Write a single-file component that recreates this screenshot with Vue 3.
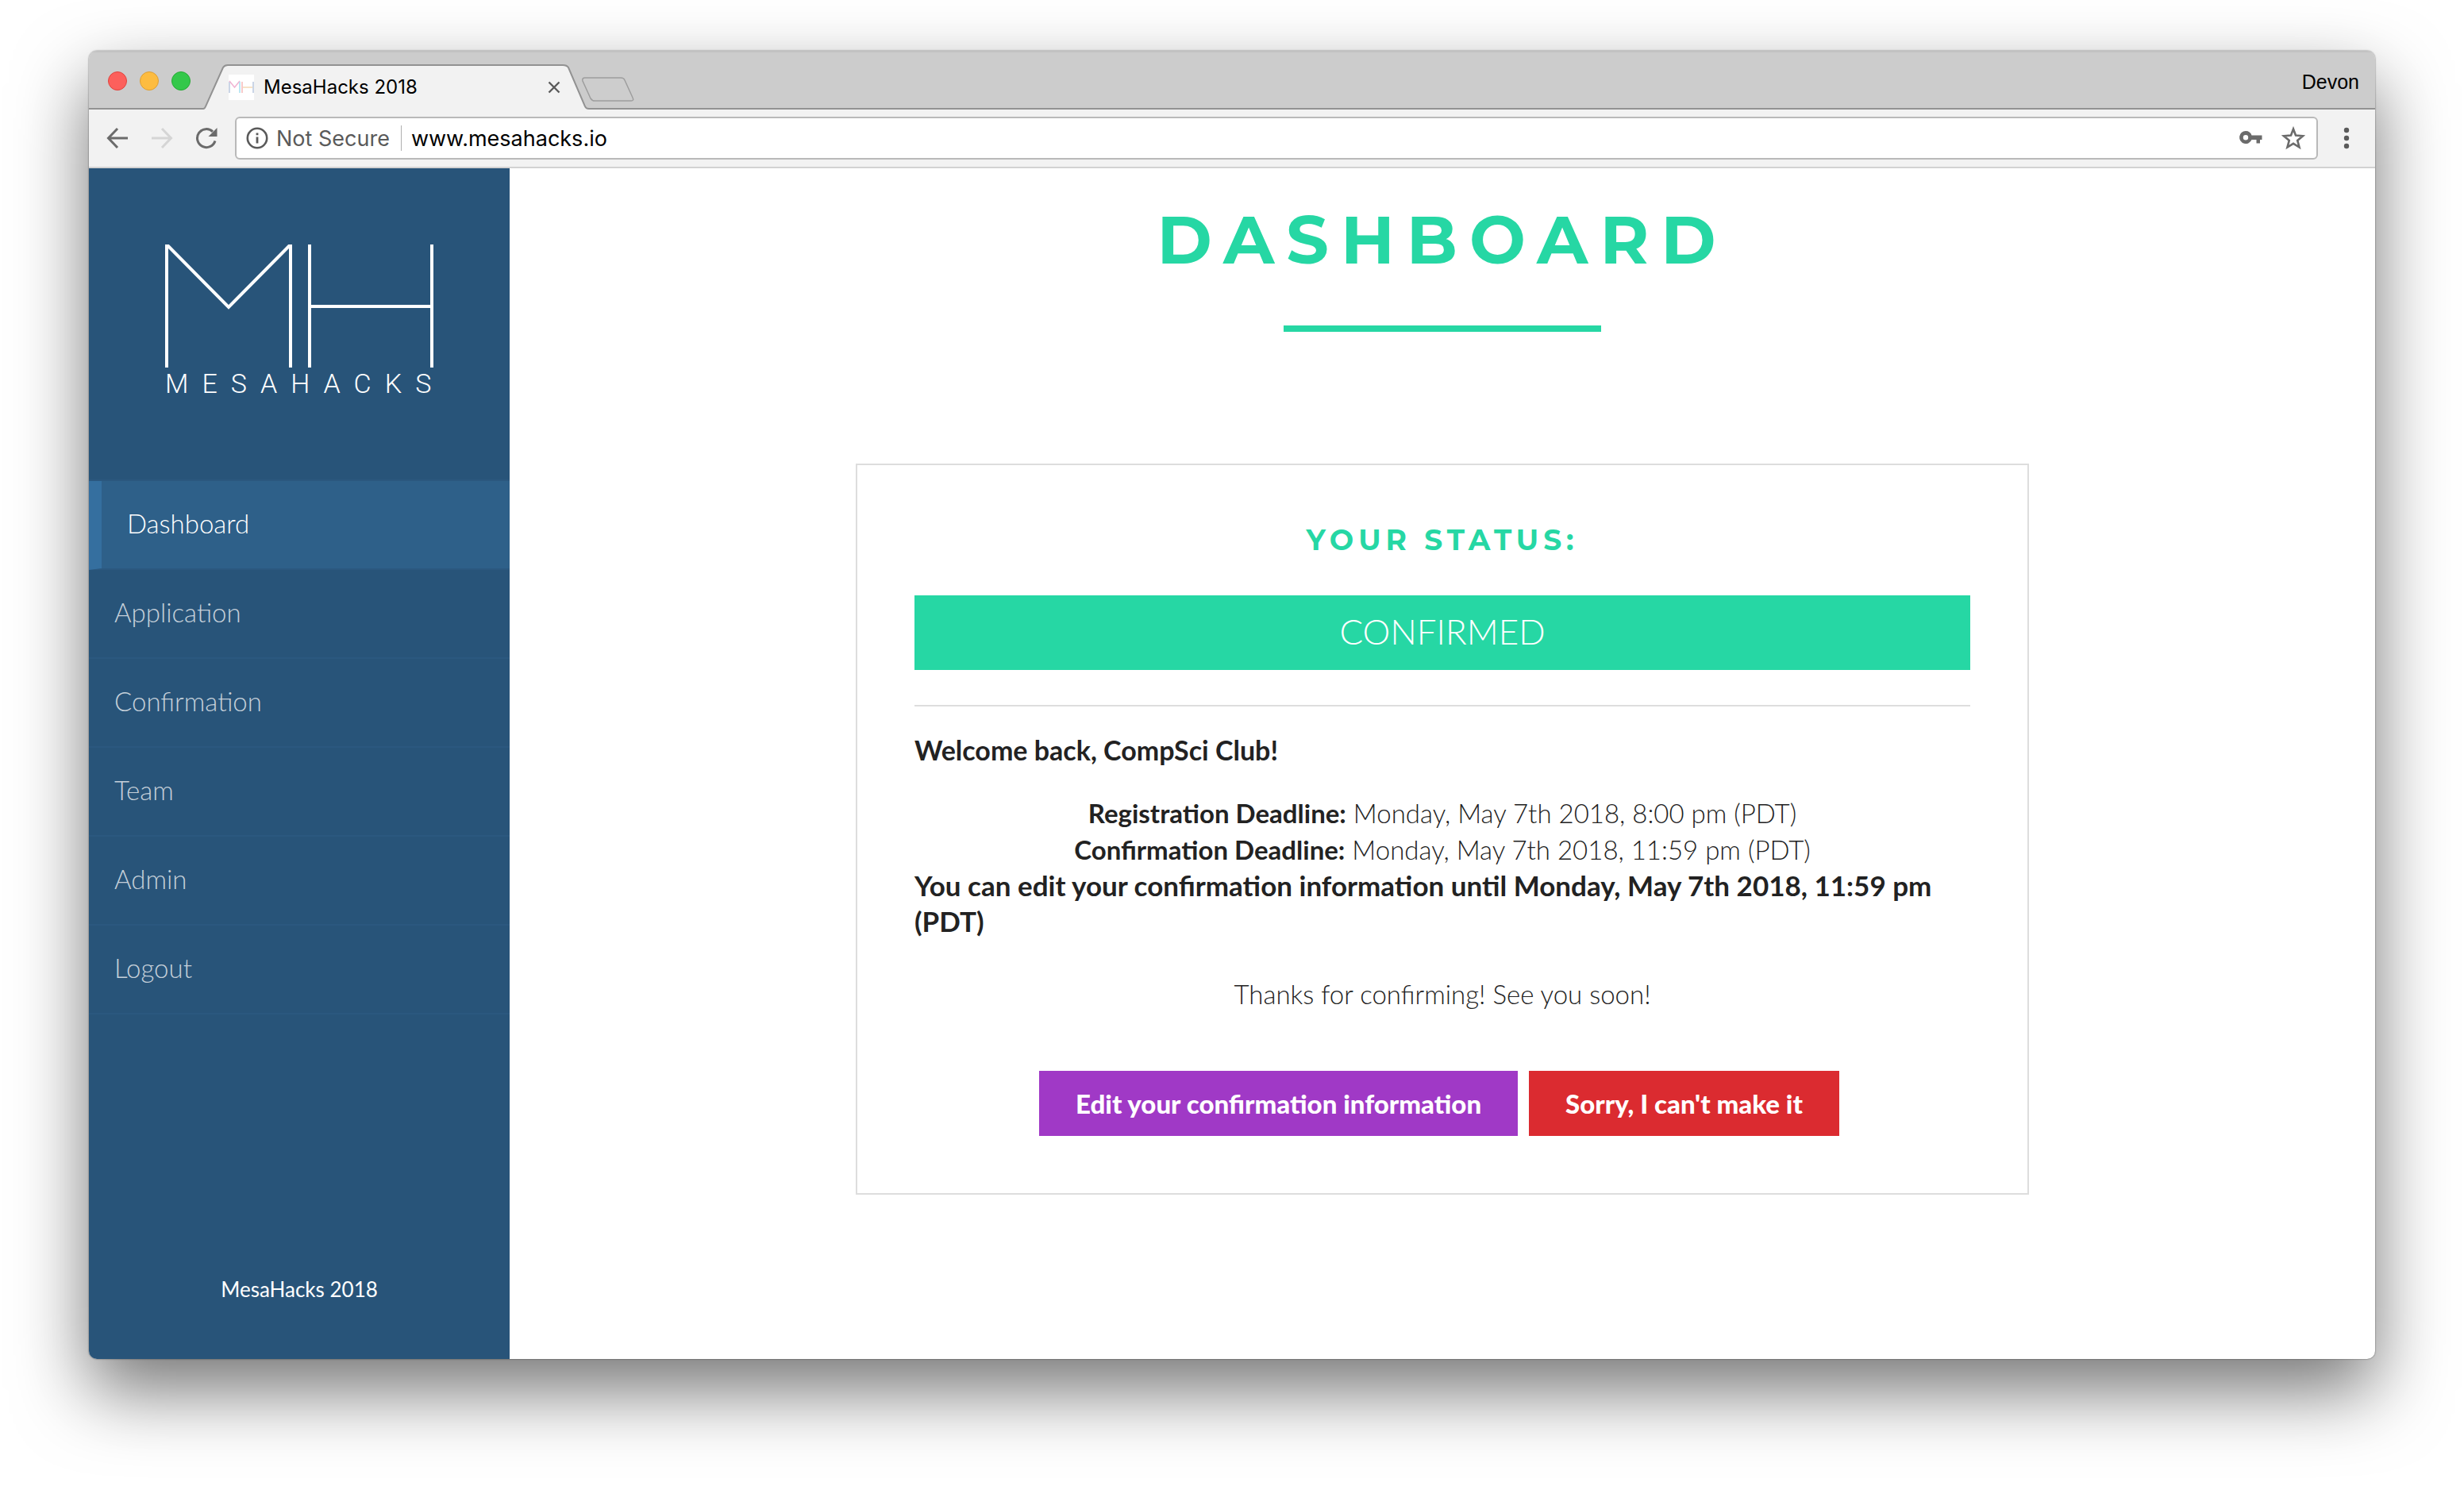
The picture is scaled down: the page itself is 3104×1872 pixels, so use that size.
<script setup>
import { ref } from 'vue'

const address = ref('www.mesahacks.io')
const current = ref('Dashboard')
const pages = ['Dashboard', 'Application', 'Confirmation', 'Team', 'Admin', 'Logout']
const deadlines = [
  { label: 'Registration Deadline:', date: 'Monday, May 7th 2018, 8:00 pm (PDT)' },
  { label: 'Confirmation Deadline:', date: 'Monday, May 7th 2018, 11:59 pm (PDT)' }
]
</script>

<template>
  <div class="desktop">
    <div class="window">
      <header class="tabstrip">
        <div class="lights">
          <button class="light red" aria-label="Close window"></button>
          <button class="light yellow" aria-label="Minimize window"></button>
          <button class="light green" aria-label="Zoom window"></button>
        </div>
        <div class="tab">
          <svg class="tab-shape" viewBox="0 0 486 57" preserveAspectRatio="none" aria-hidden="true">
            <path d="M0 57V56.5Q2 56 3 53L25 4Q27 1 31 1H453Q458 1 460 4L481 53Q482 56 486 56.5V57Z" fill="#f2f2f2" />
            <path d="M0 56Q2 56 3 53L25 4Q27 1 31 1H453Q458 1 460 4L481 53Q482 56 486 56" fill="none" stroke="#929292" stroke-width="2" />
          </svg>
          <svg class="favicon" viewBox="0 0 32 32" aria-hidden="true">
            <rect width="32" height="32" fill="#fff" />
            <path d="M1 9V23" stroke="#b9c7de" stroke-width="1.5" />
            <path d="M1 8L7.500 16L14 8" fill="none" stroke="#f0b4d2" stroke-width="1.500" />
            <path d="M14 9V23" stroke="#a5dff0" stroke-width="1.500" />
            <path d="M17 9V23" stroke="#f6b8b8" stroke-width="1.500" />
            <path d="M18 16H30" stroke="#f5d9b5" stroke-width="1.500" />
            <path d="M31 9V23" stroke="#b9c7de" stroke-width="1.500" />
          </svg>
          <span class="tab-title">MesaHacks 2018</span>
          <button class="tab-close" aria-label="Close tab">
            <svg viewBox="0 0 16 16" width="16" height="16"><path d="M1.500 1.500L14.500 14.500M14.500 1.500L1.500 14.500" stroke="#5a5a5a" stroke-width="2.400" /></svg>
          </button>
        </div>
        <button class="new-tab" aria-label="New tab">
          <svg viewBox="0 0 68 34" width="68" height="34">
            <path d="M5 2H50Q54 2 55 5L65 27Q67 31 63 31H17Q14 31 12 28L2 6Q1 2 5 2Z" fill="#cdcdcd" stroke="#9d9d9d" stroke-width="1.500" />
          </svg>
        </button>
        <span class="profile">Devon</span>
      </header>

      <div class="toolbar">
        <button class="tool" aria-label="Back">
          <svg viewBox="0 0 28 28" width="28" height="28"><path d="M27 14H3M14 2L2.500 14L14 26" fill="none" stroke="#6b6b6b" stroke-width="3" /></svg>
        </button>
        <button class="tool" aria-label="Forward">
          <svg viewBox="0 0 28 28" width="28" height="28"><path d="M1 14H25M14 2L25.500 14L14 26" fill="none" stroke="#d5d5d5" stroke-width="3" /></svg>
        </button>
        <button class="tool" aria-label="Reload">
          <svg viewBox="0 0 28 28" width="28" height="28">
            <path d="M25 17.500A11.500 11.500 0 1 1 22 5.800" fill="none" stroke="#6b6b6b" stroke-width="3" />
            <path d="M27.500 1V12H16.500Z" fill="#6b6b6b" />
          </svg>
        </button>
        <div class="omnibox">
          <button class="security">
            <svg viewBox="0 0 28 28" width="28" height="28" aria-hidden="true">
              <circle cx="14" cy="14" r="12.200" fill="none" stroke="#5a5a5a" stroke-width="2.600" />
              <path d="M14 12.500V20.500M14 7.500V10.200" stroke="#5a5a5a" stroke-width="2.800" />
            </svg>
            Not Secure
          </button>
          <input v-model="address" class="address" type="text" aria-label="Address" spellcheck="false" />
          <button class="tool" aria-label="Passwords">
            <svg viewBox="0 0 30 30" width="30" height="30">
              <path fill-rule="evenodd" d="M9 6A8 8 0 1 0 16.500 17H22.500V21.500H27V17H29.500V11.500H16.500A8 8 0 0 0 9 6ZM9 11A3.200 3.200 0 1 1 9 17.400A3.200 3.200 0 1 1 9 11Z" fill="#6b6b6b" />
            </svg>
          </button>
          <button class="tool" aria-label="Bookmark this page">
            <svg viewBox="0 0 30 30" width="30" height="30">
              <path d="M15 3.500L18 11.500L27 12.200L20.200 17.900L22.500 26.500L15 21.800L7.500 26.500L9.800 17.900L3 12.200L12 11.500Z" fill="none" stroke="#6b6b6b" stroke-width="2.600" />
            </svg>
          </button>
        </div>
        <button class="tool" aria-label="Menu">
          <svg viewBox="0 0 8 28" width="8" height="28"><g fill="#5a5a5a"><circle cx="4" cy="4" r="3.200" /><circle cx="4" cy="14" r="3.200" /><circle cx="4" cy="24" r="3.200" /></g></svg>
        </button>
      </div>

      <div class="page">
        <aside class="sidebar">
          <div class="logo">
            <svg viewBox="0 0 338 155" width="338" height="155" role="img" aria-label="MH">
              <path d="M2 155V0M158 0V155M182 0V155M336 0V155M182 78H336" fill="none" stroke="#fff" stroke-width="4" />
              <path d="M3 1L80 79L157 1" fill="none" stroke="#fff" stroke-width="4" />
            </svg>
            <span class="wordmark">MESAHACKS</span>
          </div>
          <nav>
            <ul class="menu">
              <li v-for="name in pages" :key="name">
                <a href="#" :class="{ active: name === current }" @click.prevent="current = name">{{ name }}</a>
              </li>
            </ul>
          </nav>
          <footer class="credit">MesaHacks 2018</footer>
        </aside>

        <main class="content">
          <h1>DASHBOARD</h1>
          <section class="card">
            <h2>YOUR STATUS:</h2>
            <div class="status">CONFIRMED</div>
            <hr />
            <p class="strong">Welcome back, CompSci Club!</p>
            <div class="deadlines">
              <div v-for="d in deadlines" :key="d.label"><strong>{{ d.label }}</strong> {{ d.date }}</div>
            </div>
            <p class="strong notice">You can edit your confirmation information until Monday, May 7th 2018, 11:59 pm (PDT)</p>
            <p class="thanks">Thanks for confirming! See you soon!</p>
            <div class="actions">
              <button class="edit">Edit your confirmation information</button>
              <button class="decline">Sorry, I can't make it</button>
            </div>
          </section>
        </main>
      </div>
    </div>
  </div>
</template>

<style>
body {
  margin: 0;
  background: #fff;
}
</style>

<style scoped>
* {
  box-sizing: border-box;
}
button {
  margin: 0;
  padding: 0;
  border: 0;
  background: none;
  font: inherit;
  color: inherit;
}
svg {
  display: block;
}
.desktop {
  display: flex;
  min-height: 100vh;
  padding: 64px 112px 160px;
  overflow: hidden;
  font-family: Lato, sans-serif;
}
.window {
  flex: 1;
  display: flex;
  flex-direction: column;
  min-width: 0;
  overflow: hidden;
  border-radius: 10px;
  background: #fff;
  box-shadow: 0 0 2px rgba(0, 0, 0, 0.6), 0 40px 92px rgba(0, 0, 0, 0.54);
}

/* Browser chrome */
.tabstrip {
  display: flex;
  align-items: flex-end;
  height: 74px;
  padding: 2px 20px 0 24px;
  background: #ccc;
  box-shadow: inset 0 -2px #929292, inset 0 2px #c2c2c2;
  font-family: Inter, sans-serif;
  font-size: 24px;
}
.lights {
  display: flex;
  gap: 16px;
  align-self: center;
  width: 120px;
}
.light {
  width: 24px;
  height: 24px;
  border: 1px solid #e0443e;
  border-radius: 50%;
  background: #fc605c;
}
.yellow {
  border-color: #de9f34;
  background: #fdbc40;
}
.green {
  border-color: #27aa35;
  background: #34c84a;
}
.tab {
  position: relative;
  display: flex;
  align-items: center;
  width: 486px;
  height: 57px;
  padding: 0 36px 0 32px;
}
.tab-shape {
  position: absolute;
  inset: 0;
  width: 100%;
  height: 100%;
}
.favicon {
  position: relative;
  width: 32px;
  height: 32px;
  margin-right: 12px;
}
.tab-title {
  position: relative;
  flex: 1;
  color: #000;
}
.tab-close {
  position: relative;
}
.new-tab {
  margin: 0 auto 8px -10px;
}
.profile {
  align-self: center;
  padding-top: 2px;
  font-family: "Liberation Sans", sans-serif;
  font-size: 25px;
  line-height: 28px;
  color: #000;
}
.toolbar {
  display: flex;
  align-items: center;
  gap: 28px;
  height: 74px;
  padding: 0 32px 0 22px;
  border-bottom: 2px solid #d2d2d2;
  background: #f2f2f2;
}
.omnibox {
  flex: 1;
  display: flex;
  align-items: center;
  gap: 24px;
  height: 54px;
  margin: 0 4px 0 -6px;
  padding: 0 14px 0 12px;
  border: 2px solid #b9b9b9;
  border-radius: 6px;
  background: #fff;
  font-family: Inter, sans-serif;
  font-size: 27px;
}
.security {
  display: flex;
  align-items: center;
  gap: 10px;
  height: 32px;
  padding-right: 14px;
  border-right: 1px solid #b0b0b0;
  white-space: nowrap;
  color: #5a5a5a;
}
.address {
  flex: 1;
  min-width: 0;
  margin-left: -12px;
  padding: 0;
  border: 0;
  outline: 0;
  background: none;
  font: inherit;
  color: #000;
}

/* Sidebar */
.page {
  flex: 1;
  display: flex;
}
.sidebar {
  display: flex;
  flex-direction: column;
  flex: none;
  width: 530px;
  background: #285479;
}
.logo {
  display: flex;
  flex-direction: column;
  gap: 2px;
  height: 392px;
  padding: 96px 96px 0;
}
.wordmark {
  color: #fff;
  font-family: Roboto, sans-serif;
  font-weight: 300;
  font-size: 34px;
  line-height: 36px;
  letter-spacing: 17px;
  white-space: nowrap;
}
.menu {
  margin: 0;
  padding: 0;
  border-top: 2px solid #2b587f;
  list-style: none;
}
.menu a {
  display: block;
  padding: 0 32px 4px;
  border-bottom: 2px solid #2b587f;
  font-size: 33px;
  font-weight: 300;
  line-height: 106px;
  color: #c5d0da;
  text-decoration: none;
}
.menu .active {
  border-left: 16px solid #356f9f;
  background: #2e6089;
  color: #fff;
}
.credit {
  margin-top: auto;
  padding-bottom: 70px;
  font-size: 26px;
  line-height: 36px;
  text-align: center;
  color: #fff;
}

/* Main column */
.content {
  flex: 1;
  display: flex;
  flex-direction: column;
  align-items: center;
  padding: 40px;
  color: #222;
}
h1,
h2 {
  margin: 0;
  font-family: Montserrat, Inter, sans-serif;
  font-weight: 700;
  color: #26d7a4;
  text-align: center;
}
h1 {
  font-size: 84px;
  line-height: 100px;
  letter-spacing: 15px;
}
h1::after {
  content: "";
  display: block;
  width: 400px;
  height: 8px;
  margin: 58px auto 0;
  background: #26d7a4;
}
h2 {
  font-size: 36px;
  line-height: 44px;
  letter-spacing: 6px;
}
.card {
  width: 100%;
  max-width: 1478px;
  margin-top: 166px;
  padding: 72px;
  border: 2px solid #ddd;
  font-size: 33px;
  font-weight: 300;
  line-height: 46px;
}
.status {
  margin-top: 48px;
  padding-bottom: 4px;
  background: #26d7a4;
  color: #fff;
  font-size: 44px;
  line-height: 90px;
  text-align: center;
}
hr {
  height: 2px;
  margin: 44px 0 32px;
  border: 0;
  background: #ddd;
}
p {
  margin: 0;
}
.strong {
  font-size: 34px;
  font-weight: 700;
  line-height: 45px;
}
.notice {
  font-size: 35px;
}
strong {
  font-weight: 700;
}
.deadlines {
  margin-top: 34px;
  text-align: center;
}
.thanks {
  margin-top: 46px;
  text-align: center;
}
.actions {
  display: flex;
  justify-content: center;
  gap: 14px;
  margin-top: 74px;
  padding-right: 8px;
}
.actions button {
  height: 82px;
  padding: 0 46px;
  font-weight: 900;
  color: #fff;
}
.edit {
  background: #a039c6;
}
.decline {
  background: #db2b30;
}
</style>
